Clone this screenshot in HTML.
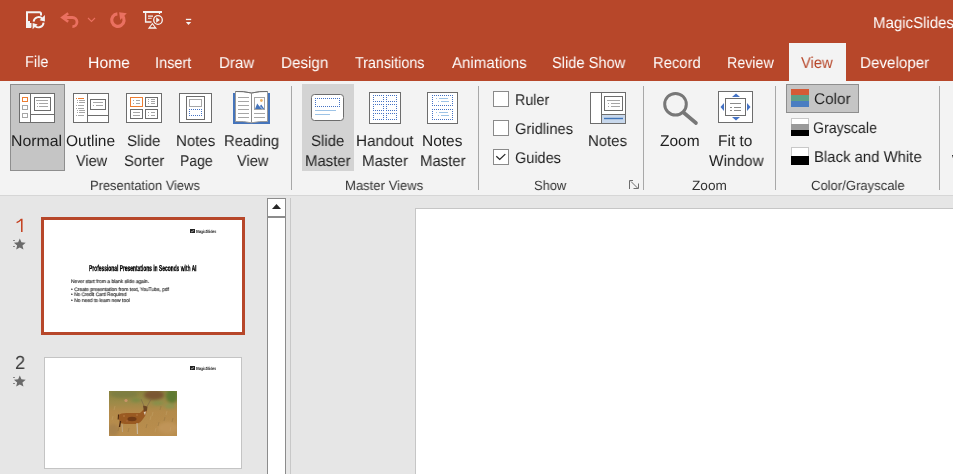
<!DOCTYPE html>
<html><head><meta charset="utf-8"><style>
html,body{margin:0;padding:0;}
body{width:953px;height:474px;overflow:hidden;position:relative;background:#E6E6E6;font-family:"Liberation Sans",sans-serif;}
.a{position:absolute;}
.tx{position:absolute;white-space:pre;line-height:1;transform-origin:0 0;font-family:"Liberation Sans",sans-serif;text-rendering:geometricPrecision;will-change:transform;}
</style></head><body>
<div class="a" style="left:0;top:0;width:953px;height:81px;background:#B7472A"></div>
<div class="a" style="left:789px;top:43px;width:57px;height:38px;background:#F3F3F3"></div>
<div class="a" style="left:0;top:81px;width:953px;height:114px;background:#F3F3F3"></div>
<div class="a" style="left:0;top:195px;width:953px;height:1px;background:#D6D6D6"></div>
<!-- buttons -->
<div class="a" style="left:10px;top:84px;width:53px;height:85px;background:#C5C5C5;border:1px solid #8E8E8E"></div>
<div class="a" style="left:302px;top:84px;width:52px;height:87px;background:#D3D3D3"></div>
<div class="a" style="left:786px;top:84px;width:71px;height:27px;background:#C5C5C5;border:1px solid #8E8E8E"></div>
<!-- separators -->
<div class="a" style="left:291px;top:86px;width:1px;height:104px;background:#A8A8A8"></div>
<div class="a" style="left:478px;top:86px;width:1px;height:104px;background:#A8A8A8"></div>
<div class="a" style="left:643px;top:86px;width:1px;height:104px;background:#A8A8A8"></div>
<div class="a" style="left:775px;top:86px;width:1px;height:104px;background:#A8A8A8"></div>
<div class="a" style="left:939px;top:86px;width:1px;height:104px;background:#A8A8A8"></div>
<div class="a" style="left:952px;top:155px;width:1px;height:1px;background:#333"></div><div class="a" style="left:952px;top:156px;width:1px;height:1px;background:#777"></div><div class="a" style="left:952px;top:157px;width:1px;height:1px;background:#bbb"></div>
<!-- workspace -->
<div class="a" style="left:415px;top:208px;width:538px;height:266px;background:#fff;border-left:1px solid #C6C6C6;border-top:1px solid #C6C6C6;box-sizing:border-box"></div>
<div class="a" style="left:290px;top:198px;width:1px;height:276px;background:#C8C8C8"></div>
<div class="a" style="left:267px;top:198px;width:19px;height:276px;background:#fff;border:1px solid #8C8C8C;border-bottom:none;box-sizing:border-box"></div>
<div class="a" style="left:267px;top:216px;width:19px;height:2px;background:#8C8C8C"></div>
<svg class="a" style="left:0;top:0" width="953" height="474" viewBox="0 0 953 474">
<path d="M272 209 L276.5 204 L281 209 Z" fill="#262626"/>
<rect x='19.5' y='93.5' width='35' height='29' fill='#fff' stroke='#6D6D6D'/><line x1='30.5' y1='93' x2='30.5' y2='123' stroke='#6D6D6D'/><line x1='30' y1='114.5' x2='55' y2='114.5' stroke='#6D6D6D'/><rect x='34.5' y='97.5' width='16' height='13' fill='#fff' stroke='#6D6D6D'/><rect x='22.5' y='97.5' width='5' height='4' fill='#fff' stroke='#ED7D31'/><rect x='22.5' y='105.5' width='5' height='4' fill='#fff' stroke='#A6A6A6'/><rect x='22.5' y='113.5' width='5' height='4' fill='#fff' stroke='#A6A6A6'/><line x1='36' y1='100.5' x2='48' y2='100.5' stroke='#A6A6A6'/><rect x='37' y='103.0' width='1' height='1' fill='#A6A6A6'/><line x1='39' y1='103.5' x2='48' y2='103.5' stroke='#A6A6A6'/><rect x='37' y='106.0' width='1' height='1' fill='#A6A6A6'/><line x1='39' y1='106.5' x2='48' y2='106.5' stroke='#A6A6A6'/><rect x='73.5' y='93.5' width='35' height='29' fill='#fff' stroke='#6D6D6D'/><line x1='87.5' y1='93' x2='87.5' y2='123' stroke='#6D6D6D'/><line x1='87' y1='115.5' x2='109' y2='115.5' stroke='#6D6D6D'/><rect x='90.5' y='99.5' width='15' height='10' fill='#fff' stroke='#6D6D6D'/><rect x='76' y='98' width='1' height='1' fill='#ED7D31'/><line x1='78' y1='98.5' x2='84' y2='98.5' stroke='#ED7D31'/><rect x='77' y='100.0' width='1' height='1' fill='#A6A6A6'/><line x1='79' y1='100.5' x2='85' y2='100.5' stroke='#A6A6A6'/><rect x='77' y='102.0' width='1' height='1' fill='#A6A6A6'/><line x1='79' y1='102.5' x2='85' y2='102.5' stroke='#A6A6A6'/><rect x='76' y='105.0' width='1' height='1' fill='#A6A6A6'/><line x1='78' y1='105.5' x2='84' y2='105.5' stroke='#A6A6A6'/><rect x='76' y='108.0' width='1' height='1' fill='#A6A6A6'/><line x1='78' y1='108.5' x2='84' y2='108.5' stroke='#A6A6A6'/><rect x='77' y='110.0' width='1' height='1' fill='#A6A6A6'/><line x1='79' y1='110.5' x2='85' y2='110.5' stroke='#A6A6A6'/><rect x='77' y='112.0' width='1' height='1' fill='#A6A6A6'/><line x1='79' y1='112.5' x2='85' y2='112.5' stroke='#A6A6A6'/><rect x='76' y='115.0' width='1' height='1' fill='#A6A6A6'/><line x1='78' y1='115.5' x2='84' y2='115.5' stroke='#A6A6A6'/><line x1='93' y1='102.5' x2='103' y2='102.5' stroke='#A6A6A6'/><rect x='93' y='105' width='1' height='1' fill='#A6A6A6'/><line x1='96' y1='105.5' x2='103' y2='105.5' stroke='#A6A6A6'/><rect x='126.5' y='93.5' width='35' height='29' fill='#fff' stroke='#6D6D6D'/><rect x='130.5' y='97.5' width='12' height='9' fill='#fff' stroke='#ED7D31'/><rect x='145.5' y='97.5' width='12' height='9' fill='#fff' stroke='#6D6D6D'/><rect x='130.5' y='109.5' width='12' height='9' fill='#fff' stroke='#6D6D6D'/><rect x='145.5' y='109.5' width='12' height='9' fill='#fff' stroke='#6D6D6D'/><rect x='133' y='100.0' width='1' height='1' fill='#A6A6A6'/><line x1='136' y1='100.5' x2='140' y2='100.5' stroke='#A6A6A6'/><rect x='133' y='103.0' width='1' height='1' fill='#A6A6A6'/><line x1='136' y1='103.5' x2='140' y2='103.5' stroke='#A6A6A6'/><rect x='148' y='99.0' width='1' height='1' fill='#A6A6A6'/><line x1='151' y1='99.5' x2='155' y2='99.5' stroke='#A6A6A6'/><rect x='148' y='101.0' width='1' height='1' fill='#A6A6A6'/><line x1='151' y1='101.5' x2='155' y2='101.5' stroke='#A6A6A6'/><rect x='148' y='103.0' width='1' height='1' fill='#A6A6A6'/><line x1='151' y1='103.5' x2='155' y2='103.5' stroke='#A6A6A6'/><line x1='133' y1='112.5' x2='140' y2='112.5' stroke='#A6A6A6'/><rect x='148' y='112.0' width='1' height='1' fill='#A6A6A6'/><line x1='151' y1='112.5' x2='155' y2='112.5' stroke='#A6A6A6'/><line x1='133' y1='115.5' x2='140' y2='115.5' stroke='#A6A6A6'/><rect x='148' y='115.0' width='1' height='1' fill='#A6A6A6'/><line x1='151' y1='115.5' x2='155' y2='115.5' stroke='#A6A6A6'/><rect x='179.5' y='93.5' width='32' height='29' fill='#fff' stroke='#6D6D6D'/><rect x='186.5' y='96.5' width='18' height='23' fill='#fff' stroke='#6D6D6D'/><rect x='189.5' y='99.5' width='12' height='7' fill='#fff' stroke='#A6A6A6'/><rect x='189.0' y='109.0' width='1' height='1' fill='#4472C4'/><rect x='189.0' y='111.0' width='1' height='1' fill='#4472C4'/><rect x='189.0' y='113.0' width='1' height='1' fill='#4472C4'/><rect x='189.0' y='115.0' width='1' height='1' fill='#4472C4'/><rect x='191.0' y='109.0' width='1' height='1' fill='#4472C4'/><rect x='191.0' y='115.0' width='1' height='1' fill='#4472C4'/><rect x='193.0' y='109.0' width='1' height='1' fill='#4472C4'/><rect x='193.0' y='115.0' width='1' height='1' fill='#4472C4'/><rect x='195.0' y='109.0' width='1' height='1' fill='#4472C4'/><rect x='195.0' y='115.0' width='1' height='1' fill='#4472C4'/><rect x='197.0' y='109.0' width='1' height='1' fill='#4472C4'/><rect x='197.0' y='115.0' width='1' height='1' fill='#4472C4'/><rect x='199.0' y='109.0' width='1' height='1' fill='#4472C4'/><rect x='199.0' y='115.0' width='1' height='1' fill='#4472C4'/><rect x='201.0' y='109.0' width='1' height='1' fill='#4472C4'/><rect x='201.0' y='111.0' width='1' height='1' fill='#4472C4'/><rect x='201.0' y='113.0' width='1' height='1' fill='#4472C4'/><rect x='201.0' y='115.0' width='1' height='1' fill='#4472C4'/><path d='M233 93 H270 V124 H233 Z' fill='#4574BB'/><path d='M235.5 91.5 Q243 91 251.5 93 Q260 91 267.5 91.5 V121.5 Q260 121 251.5 122.8 Q243 121 235.5 121.5 Z' fill='#fff' stroke='#9A9A9A'/><path d='M235.5 91.5 Q243 91 251.5 93 Q260 91 267.5 91.5' fill='none' stroke='#6D6D6D'/><line x1='251.5' y1='93' x2='251.5' y2='122.5' stroke='#8A8A8A'/><line x1='238' y1='97.5' x2='249' y2='97.5' stroke='#A6A6A6'/><line x1='238' y1='101.5' x2='249' y2='101.5' stroke='#A6A6A6'/><line x1='238' y1='105.5' x2='249' y2='105.5' stroke='#A6A6A6'/><line x1='238' y1='109.5' x2='249' y2='109.5' stroke='#A6A6A6'/><line x1='238' y1='113.5' x2='249' y2='113.5' stroke='#A6A6A6'/><line x1='238' y1='117.5' x2='249' y2='117.5' stroke='#A6A6A6'/><line x1='254' y1='113.5' x2='265' y2='113.5' stroke='#A6A6A6'/><line x1='254' y1='117.5' x2='265' y2='117.5' stroke='#A6A6A6'/><rect x='254.5' y='97.5' width='10' height='12' fill='#fff' stroke='#A6A6A6'/><path d='M255 109 L257.2 103.5 L259.6 106.5 L261.2 104.5 L264 108.5 V109 Z' fill='#4574BB'/><path d='M259.6 106.2 L262.6 109' stroke='#fff' stroke-width='0.7'/><circle cx='261.4' cy='100.5' r='1.4' fill='#EDB060'/><rect x='311.5' y='94.5' width='32' height='26' rx='3' fill='#fff' stroke='#6D6D6D'/><rect x='315.0' y='98.0' width='1' height='1' fill='#4472C4'/><rect x='315.0' y='100.0' width='1' height='1' fill='#4472C4'/><rect x='315.0' y='102.0' width='1' height='1' fill='#4472C4'/><rect x='315.0' y='104.0' width='1' height='1' fill='#4472C4'/><rect x='315.0' y='106.0' width='1' height='1' fill='#4472C4'/><rect x='317.0' y='98.0' width='1' height='1' fill='#4472C4'/><rect x='317.0' y='106.0' width='1' height='1' fill='#4472C4'/><rect x='319.0' y='98.0' width='1' height='1' fill='#4472C4'/><rect x='319.0' y='106.0' width='1' height='1' fill='#4472C4'/><rect x='321.0' y='98.0' width='1' height='1' fill='#4472C4'/><rect x='321.0' y='106.0' width='1' height='1' fill='#4472C4'/><rect x='323.0' y='98.0' width='1' height='1' fill='#4472C4'/><rect x='323.0' y='106.0' width='1' height='1' fill='#4472C4'/><rect x='325.0' y='98.0' width='1' height='1' fill='#4472C4'/><rect x='325.0' y='106.0' width='1' height='1' fill='#4472C4'/><rect x='327.0' y='98.0' width='1' height='1' fill='#4472C4'/><rect x='327.0' y='106.0' width='1' height='1' fill='#4472C4'/><rect x='329.0' y='98.0' width='1' height='1' fill='#4472C4'/><rect x='329.0' y='106.0' width='1' height='1' fill='#4472C4'/><rect x='331.0' y='98.0' width='1' height='1' fill='#4472C4'/><rect x='331.0' y='106.0' width='1' height='1' fill='#4472C4'/><rect x='333.0' y='98.0' width='1' height='1' fill='#4472C4'/><rect x='333.0' y='106.0' width='1' height='1' fill='#4472C4'/><rect x='335.0' y='98.0' width='1' height='1' fill='#4472C4'/><rect x='335.0' y='106.0' width='1' height='1' fill='#4472C4'/><rect x='337.0' y='98.0' width='1' height='1' fill='#4472C4'/><rect x='337.0' y='106.0' width='1' height='1' fill='#4472C4'/><rect x='339.0' y='98.0' width='1' height='1' fill='#4472C4'/><rect x='339.0' y='100.0' width='1' height='1' fill='#4472C4'/><rect x='339.0' y='102.0' width='1' height='1' fill='#4472C4'/><rect x='339.0' y='104.0' width='1' height='1' fill='#4472C4'/><rect x='339.0' y='106.0' width='1' height='1' fill='#4472C4'/><line x1='315' y1='110.5' x2='336' y2='110.5' stroke='#9DC3E6'/><line x1='315' y1='114.5' x2='330' y2='114.5' stroke='#9DC3E6'/><rect x='369.5' y='92.5' width='31' height='31' fill='#fff' stroke='#6D6D6D'/><rect x='373.0' y='95.0' width='1' height='1' fill='#4472C4'/><rect x='373.0' y='97.0' width='1' height='1' fill='#4472C4'/><rect x='373.0' y='99.0' width='1' height='1' fill='#4472C4'/><rect x='373.0' y='101.0' width='1' height='1' fill='#4472C4'/><rect x='375.0' y='95.0' width='1' height='1' fill='#4472C4'/><rect x='375.0' y='101.0' width='1' height='1' fill='#4472C4'/><rect x='377.0' y='95.0' width='1' height='1' fill='#4472C4'/><rect x='377.0' y='101.0' width='1' height='1' fill='#4472C4'/><rect x='379.0' y='95.0' width='1' height='1' fill='#4472C4'/><rect x='379.0' y='101.0' width='1' height='1' fill='#4472C4'/><rect x='381.0' y='95.0' width='1' height='1' fill='#4472C4'/><rect x='381.0' y='101.0' width='1' height='1' fill='#4472C4'/><rect x='383.0' y='95.0' width='1' height='1' fill='#4472C4'/><rect x='383.0' y='97.0' width='1' height='1' fill='#4472C4'/><rect x='383.0' y='99.0' width='1' height='1' fill='#4472C4'/><rect x='383.0' y='101.0' width='1' height='1' fill='#4472C4'/><rect x='373.0' y='104.0' width='1' height='1' fill='#4472C4'/><rect x='373.0' y='106.0' width='1' height='1' fill='#4472C4'/><rect x='373.0' y='108.0' width='1' height='1' fill='#4472C4'/><rect x='373.0' y='110.0' width='1' height='1' fill='#4472C4'/><rect x='375.0' y='104.0' width='1' height='1' fill='#4472C4'/><rect x='375.0' y='110.0' width='1' height='1' fill='#4472C4'/><rect x='377.0' y='104.0' width='1' height='1' fill='#4472C4'/><rect x='377.0' y='110.0' width='1' height='1' fill='#4472C4'/><rect x='379.0' y='104.0' width='1' height='1' fill='#4472C4'/><rect x='379.0' y='110.0' width='1' height='1' fill='#4472C4'/><rect x='381.0' y='104.0' width='1' height='1' fill='#4472C4'/><rect x='381.0' y='110.0' width='1' height='1' fill='#4472C4'/><rect x='383.0' y='104.0' width='1' height='1' fill='#4472C4'/><rect x='383.0' y='106.0' width='1' height='1' fill='#4472C4'/><rect x='383.0' y='108.0' width='1' height='1' fill='#4472C4'/><rect x='383.0' y='110.0' width='1' height='1' fill='#4472C4'/><rect x='373.0' y='113.0' width='1' height='1' fill='#4472C4'/><rect x='373.0' y='115.0' width='1' height='1' fill='#4472C4'/><rect x='373.0' y='117.0' width='1' height='1' fill='#4472C4'/><rect x='373.0' y='119.0' width='1' height='1' fill='#4472C4'/><rect x='375.0' y='113.0' width='1' height='1' fill='#4472C4'/><rect x='375.0' y='119.0' width='1' height='1' fill='#4472C4'/><rect x='377.0' y='113.0' width='1' height='1' fill='#4472C4'/><rect x='377.0' y='119.0' width='1' height='1' fill='#4472C4'/><rect x='379.0' y='113.0' width='1' height='1' fill='#4472C4'/><rect x='379.0' y='119.0' width='1' height='1' fill='#4472C4'/><rect x='381.0' y='113.0' width='1' height='1' fill='#4472C4'/><rect x='381.0' y='119.0' width='1' height='1' fill='#4472C4'/><rect x='383.0' y='113.0' width='1' height='1' fill='#4472C4'/><rect x='383.0' y='115.0' width='1' height='1' fill='#4472C4'/><rect x='383.0' y='117.0' width='1' height='1' fill='#4472C4'/><rect x='383.0' y='119.0' width='1' height='1' fill='#4472C4'/><rect x='386.0' y='95.0' width='1' height='1' fill='#4472C4'/><rect x='386.0' y='97.0' width='1' height='1' fill='#4472C4'/><rect x='386.0' y='99.0' width='1' height='1' fill='#4472C4'/><rect x='386.0' y='101.0' width='1' height='1' fill='#4472C4'/><rect x='388.0' y='95.0' width='1' height='1' fill='#4472C4'/><rect x='388.0' y='101.0' width='1' height='1' fill='#4472C4'/><rect x='390.0' y='95.0' width='1' height='1' fill='#4472C4'/><rect x='390.0' y='101.0' width='1' height='1' fill='#4472C4'/><rect x='392.0' y='95.0' width='1' height='1' fill='#4472C4'/><rect x='392.0' y='101.0' width='1' height='1' fill='#4472C4'/><rect x='394.0' y='95.0' width='1' height='1' fill='#4472C4'/><rect x='394.0' y='101.0' width='1' height='1' fill='#4472C4'/><rect x='396.0' y='95.0' width='1' height='1' fill='#4472C4'/><rect x='396.0' y='97.0' width='1' height='1' fill='#4472C4'/><rect x='396.0' y='99.0' width='1' height='1' fill='#4472C4'/><rect x='396.0' y='101.0' width='1' height='1' fill='#4472C4'/><rect x='386.0' y='104.0' width='1' height='1' fill='#4472C4'/><rect x='386.0' y='106.0' width='1' height='1' fill='#4472C4'/><rect x='386.0' y='108.0' width='1' height='1' fill='#4472C4'/><rect x='386.0' y='110.0' width='1' height='1' fill='#4472C4'/><rect x='388.0' y='104.0' width='1' height='1' fill='#4472C4'/><rect x='388.0' y='110.0' width='1' height='1' fill='#4472C4'/><rect x='390.0' y='104.0' width='1' height='1' fill='#4472C4'/><rect x='390.0' y='110.0' width='1' height='1' fill='#4472C4'/><rect x='392.0' y='104.0' width='1' height='1' fill='#4472C4'/><rect x='392.0' y='110.0' width='1' height='1' fill='#4472C4'/><rect x='394.0' y='104.0' width='1' height='1' fill='#4472C4'/><rect x='394.0' y='110.0' width='1' height='1' fill='#4472C4'/><rect x='396.0' y='104.0' width='1' height='1' fill='#4472C4'/><rect x='396.0' y='106.0' width='1' height='1' fill='#4472C4'/><rect x='396.0' y='108.0' width='1' height='1' fill='#4472C4'/><rect x='396.0' y='110.0' width='1' height='1' fill='#4472C4'/><rect x='386.0' y='113.0' width='1' height='1' fill='#4472C4'/><rect x='386.0' y='115.0' width='1' height='1' fill='#4472C4'/><rect x='386.0' y='117.0' width='1' height='1' fill='#4472C4'/><rect x='386.0' y='119.0' width='1' height='1' fill='#4472C4'/><rect x='388.0' y='113.0' width='1' height='1' fill='#4472C4'/><rect x='388.0' y='119.0' width='1' height='1' fill='#4472C4'/><rect x='390.0' y='113.0' width='1' height='1' fill='#4472C4'/><rect x='390.0' y='119.0' width='1' height='1' fill='#4472C4'/><rect x='392.0' y='113.0' width='1' height='1' fill='#4472C4'/><rect x='392.0' y='119.0' width='1' height='1' fill='#4472C4'/><rect x='394.0' y='113.0' width='1' height='1' fill='#4472C4'/><rect x='394.0' y='119.0' width='1' height='1' fill='#4472C4'/><rect x='396.0' y='113.0' width='1' height='1' fill='#4472C4'/><rect x='396.0' y='115.0' width='1' height='1' fill='#4472C4'/><rect x='396.0' y='117.0' width='1' height='1' fill='#4472C4'/><rect x='396.0' y='119.0' width='1' height='1' fill='#4472C4'/><rect x='427.5' y='92.5' width='30' height='31' fill='#fff' stroke='#6D6D6D'/><rect x='432.0' y='95.0' width='1' height='1' fill='#4472C4'/><rect x='432.0' y='97.0' width='1' height='1' fill='#4472C4'/><rect x='432.0' y='99.0' width='1' height='1' fill='#4472C4'/><rect x='432.0' y='101.0' width='1' height='1' fill='#4472C4'/><rect x='432.0' y='103.0' width='1' height='1' fill='#4472C4'/><rect x='432.0' y='105.0' width='1' height='1' fill='#4472C4'/><rect x='434.0' y='95.0' width='1' height='1' fill='#4472C4'/><rect x='434.0' y='105.0' width='1' height='1' fill='#4472C4'/><rect x='436.0' y='95.0' width='1' height='1' fill='#4472C4'/><rect x='436.0' y='105.0' width='1' height='1' fill='#4472C4'/><rect x='438.0' y='95.0' width='1' height='1' fill='#4472C4'/><rect x='438.0' y='105.0' width='1' height='1' fill='#4472C4'/><rect x='440.0' y='95.0' width='1' height='1' fill='#4472C4'/><rect x='440.0' y='105.0' width='1' height='1' fill='#4472C4'/><rect x='442.0' y='95.0' width='1' height='1' fill='#4472C4'/><rect x='442.0' y='105.0' width='1' height='1' fill='#4472C4'/><rect x='444.0' y='95.0' width='1' height='1' fill='#4472C4'/><rect x='444.0' y='105.0' width='1' height='1' fill='#4472C4'/><rect x='446.0' y='95.0' width='1' height='1' fill='#4472C4'/><rect x='446.0' y='105.0' width='1' height='1' fill='#4472C4'/><rect x='448.0' y='95.0' width='1' height='1' fill='#4472C4'/><rect x='448.0' y='105.0' width='1' height='1' fill='#4472C4'/><rect x='450.0' y='95.0' width='1' height='1' fill='#4472C4'/><rect x='450.0' y='105.0' width='1' height='1' fill='#4472C4'/><rect x='452.0' y='95.0' width='1' height='1' fill='#4472C4'/><rect x='452.0' y='97.0' width='1' height='1' fill='#4472C4'/><rect x='452.0' y='99.0' width='1' height='1' fill='#4472C4'/><rect x='452.0' y='101.0' width='1' height='1' fill='#4472C4'/><rect x='452.0' y='103.0' width='1' height='1' fill='#4472C4'/><rect x='452.0' y='105.0' width='1' height='1' fill='#4472C4'/><rect x='436' y='98.0' width='1' height='1' fill='#9DC3E6'/><line x1='439' y1='98.5' x2='448' y2='98.5' stroke='#9DC3E6'/><rect x='438' y='101.0' width='1' height='1' fill='#9DC3E6'/><line x1='441' y1='101.5' x2='449' y2='101.5' stroke='#9DC3E6'/><rect x='432.0' y='109.0' width='1' height='1' fill='#4472C4'/><rect x='432.0' y='111.0' width='1' height='1' fill='#4472C4'/><rect x='432.0' y='113.0' width='1' height='1' fill='#4472C4'/><rect x='432.0' y='115.0' width='1' height='1' fill='#4472C4'/><rect x='432.0' y='117.0' width='1' height='1' fill='#4472C4'/><rect x='432.0' y='119.0' width='1' height='1' fill='#4472C4'/><rect x='434.0' y='109.0' width='1' height='1' fill='#4472C4'/><rect x='434.0' y='119.0' width='1' height='1' fill='#4472C4'/><rect x='436.0' y='109.0' width='1' height='1' fill='#4472C4'/><rect x='436.0' y='119.0' width='1' height='1' fill='#4472C4'/><rect x='438.0' y='109.0' width='1' height='1' fill='#4472C4'/><rect x='438.0' y='119.0' width='1' height='1' fill='#4472C4'/><rect x='440.0' y='109.0' width='1' height='1' fill='#4472C4'/><rect x='440.0' y='119.0' width='1' height='1' fill='#4472C4'/><rect x='442.0' y='109.0' width='1' height='1' fill='#4472C4'/><rect x='442.0' y='119.0' width='1' height='1' fill='#4472C4'/><rect x='444.0' y='109.0' width='1' height='1' fill='#4472C4'/><rect x='444.0' y='119.0' width='1' height='1' fill='#4472C4'/><rect x='446.0' y='109.0' width='1' height='1' fill='#4472C4'/><rect x='446.0' y='119.0' width='1' height='1' fill='#4472C4'/><rect x='448.0' y='109.0' width='1' height='1' fill='#4472C4'/><rect x='448.0' y='119.0' width='1' height='1' fill='#4472C4'/><rect x='450.0' y='109.0' width='1' height='1' fill='#4472C4'/><rect x='450.0' y='119.0' width='1' height='1' fill='#4472C4'/><rect x='452.0' y='109.0' width='1' height='1' fill='#4472C4'/><rect x='452.0' y='111.0' width='1' height='1' fill='#4472C4'/><rect x='452.0' y='113.0' width='1' height='1' fill='#4472C4'/><rect x='452.0' y='115.0' width='1' height='1' fill='#4472C4'/><rect x='452.0' y='117.0' width='1' height='1' fill='#4472C4'/><rect x='452.0' y='119.0' width='1' height='1' fill='#4472C4'/><rect x='436' y='112.0' width='1' height='1' fill='#9DC3E6'/><line x1='439' y1='112.5' x2='448' y2='112.5' stroke='#9DC3E6'/><rect x='438' y='115.0' width='1' height='1' fill='#9DC3E6'/><line x1='441' y1='115.5' x2='449' y2='115.5' stroke='#9DC3E6'/><rect x='493.5' y='91.5' width='15' height='15' fill='#fff' stroke='#8A8A8A'/><rect x='493.5' y='120.5' width='15' height='15' fill='#fff' stroke='#8A8A8A'/><rect x='493.5' y='149.5' width='15' height='15' fill='#fff' stroke='#8A8A8A'/><path d='M496.3 156.2 L499.7 159.4 L505.3 154.1' fill='none' stroke='#262626' stroke-width='1.3'/><rect x='590.5' y='92.5' width='35' height='31' fill='#fff' stroke='#6D6D6D'/><rect x='602' y='115' width='23' height='8' fill='#C8D8EC'/><line x1='601.5' y1='92' x2='601.5' y2='124' stroke='#6D6D6D'/><line x1='601' y1='114.5' x2='626' y2='114.5' stroke='#6D6D6D'/><rect x='604.5' y='96.5' width='18' height='14' fill='#fff' stroke='#6D6D6D'/><line x1='604' y1='118.5' x2='623' y2='118.5' stroke='#3E73B8' stroke-width='1.4'/><line x1='607' y1='100.5' x2='620' y2='100.5' stroke='#A6A6A6'/><rect x='608' y='103.0' width='1' height='1' fill='#A6A6A6'/><line x1='611' y1='103.5' x2='620' y2='103.5' stroke='#A6A6A6'/><rect x='608' y='106.0' width='1' height='1' fill='#A6A6A6'/><line x1='611' y1='106.5' x2='620' y2='106.5' stroke='#A6A6A6'/><path d='M629.5 189 V180.5 H633' fill='none' stroke='#6D6D6D'/><path d='M631 181.5 L637.5 188' stroke='#6D6D6D'/><path d='M638.5 183.5 V188.5 H633.5' fill='none' stroke='#6D6D6D'/><circle cx='675.5' cy='104.2' r='10.8' fill='none' stroke='#777' stroke-width='3'/><line x1='683.5' y1='112.5' x2='696' y2='123' stroke='#777' stroke-width='3.6' stroke-linecap='round'/><rect x='718.5' y='91.5' width='34' height='31' fill='#fff' stroke='#6D6D6D'/><rect x='725.5' y='98.5' width='20' height='17' fill='#fff' stroke='#6D6D6D'/><path d='M732 97 H740 L736 93.5 Z M732 117 H740 L736 120.5 Z M724 103 V111 L720.5 107 Z M747 103 V111 L750.5 107 Z' fill='#4472C4'/><line x1='730' y1='103.5' x2='741' y2='103.5' stroke='#8A8A8A'/><line x1='730' y1='107.5' x2='732' y2='107.5' stroke='#8A8A8A'/><line x1='734' y1='107.5' x2='741' y2='107.5' stroke='#8A8A8A'/><line x1='730' y1='110.5' x2='732' y2='110.5' stroke='#8A8A8A'/><line x1='734' y1='110.5' x2='741' y2='110.5' stroke='#8A8A8A'/><rect x='791' y='89' width='18' height='6' fill='#D55A37'/><rect x='791' y='95' width='18' height='6' fill='#5E9F88'/><rect x='791' y='101' width='18' height='6' fill='#4A7DC1'/><rect x='791.5' y='118.5' width='17' height='17' fill='#fff' stroke='#C8C8C8'/><rect x='791' y='124' width='18' height='6' fill='#9A9A9A'/><rect x='791' y='130' width='18' height='6' fill='#000'/><rect x='791.5' y='147.5' width='17' height='17' fill='#fff' stroke='#C8C8C8'/><rect x='791' y='156' width='18' height='9' fill='#000'/>
<path d='M31 27 H27 V12.2 H39.5 Q41 12.2 41 13.7 V15.5' fill='none' stroke='#F4F4F4' stroke-width='2'/><path d='M26.5 21 H30 V23 H31.5 V27.5 H26.5 Z' fill='#F4F4F4'/><path d='M33.6 21.6 A5.1 5.1 0 0 1 42.3 18.6' fill='none' stroke='#F4F4F4' stroke-width='1.9'/><path d='M44.9 14.9 V21.5 L39.6 20.2 Z' fill='#F4F4F4'/><path d='M43.6 22.6 A5.1 5.1 0 0 1 34.9 25.8' fill='none' stroke='#F4F4F4' stroke-width='1.9'/><path d='M32.6 29.2 V23 L37.6 24.6 Z' fill='#F4F4F4'/><path d='M68.2 13.2 L62.4 17.5 L68.2 21.8' fill='none' stroke='#EA7060' stroke-width='2.6'/><path d='M62.8 17.5 H72.4 A4.6 4.6 0 0 1 72.4 26.7' fill='none' stroke='#EA7060' stroke-width='2.8'/><path d='M88 18 L91.5 21.5 L95 18' fill='none' stroke='#EA7060' stroke-width='1.1'/><path d='M117.4 13.9 A6.2 6.2 0 1 0 122.3 15.7' fill='none' stroke='#EA7060' stroke-width='3.2'/><path d='M119.1 12.2 L126.8 13.3 L120.2 20 Z' fill='#EA7060'/><path d='M143 12 H162' stroke='#F4F4F4' stroke-width='2'/><path d='M145.6 12.5 V22 H151.5' fill='none' stroke='#F4F4F4' stroke-width='1.4'/><path d='M159.5 12.5 V14' stroke='#F4F4F4' stroke-width='1.2'/><path d='M148 16.1 H153 M148 18.3 H151.7' stroke='#F4F4F4' stroke-width='1.1'/><circle cx='158' cy='20' r='4.3' fill='none' stroke='#F4F4F4' stroke-width='1.3'/><path d='M156.2 17.3 V22.7 L159.9 20 Z' fill='#F4F4F4'/><path d='M147.8 28.8 L152.4 22.8 L157 28.8 Z' fill='#F4F4F4'/><path d='M150.2 27.3 L152.4 24.6 L154.6 27.3 Z' fill='#B7472A'/><rect x='185.9' y='18.8' width='5.3' height='1.3' fill='#F4F4F4'/><path d='M185.9 22 H191.2 L188.5 25 Z' fill='#F4F4F4'/>
</svg>
<div class="a" style="left:41px;top:217px;width:204px;height:118px;border:3px solid #B7472A;box-sizing:border-box;background:#fff"></div><div class="a" style="left:44px;top:357px;width:198px;height:112px;border:1px solid #C4C4C4;box-sizing:border-box;background:#fff"></div>
<svg class="a" style="left:0;top:0" width="953" height="474" viewBox="0 0 953 474"><path d='M21.8 232 V219.4 H21.2 Q19.5 221.5 16.6 222.6' fill='none' stroke='#C43E1C' stroke-width='1.5'/><path d='M19.80 238.40 L21.44 242.34 L25.70 242.68 L22.45 245.46 L23.44 249.62 L19.80 247.39 L16.16 249.62 L17.15 245.46 L13.90 242.68 L18.16 242.34 Z' fill='#6A6A6A'/><rect x='13' y='240' width='2' height='1' fill='#8a8a8a'/><rect x='13' y='246' width='2' height='1' fill='#8a8a8a'/><path d='M19.80 375.40 L21.44 379.34 L25.70 379.68 L22.45 382.46 L23.44 386.62 L19.80 384.39 L16.16 386.62 L17.15 382.46 L13.90 379.68 L18.16 379.34 Z' fill='#6A6A6A'/><rect x='13' y='377' width='2' height='1' fill='#8a8a8a'/><rect x='13' y='383' width='2' height='1' fill='#8a8a8a'/><rect x='190' y='229' width='5' height='4' fill='#222'/><path d='M191 232 L194 230.5' stroke='#fff' stroke-width='0.6'/><rect x='190' y='366' width='5' height='4' fill='#222'/><path d='M191 369 L194 367.5' stroke='#fff' stroke-width='0.6'/><defs><linearGradient id="dg" x1="0" y1="0" x2="0" y2="1">
<stop offset="0" stop-color="#88823E"/><stop offset="0.25" stop-color="#9C8A48"/><stop offset="0.45" stop-color="#B38A4A"/><stop offset="1" stop-color="#BA8E4E"/></linearGradient>
<filter id="bl" x="-30%" y="-30%" width="160%" height="160%"><feGaussianBlur stdDeviation="1.8"/></filter>
<filter id="bl2" x="-20%" y="-20%" width="140%" height="140%"><feGaussianBlur stdDeviation="0.6"/></filter>
<clipPath id="dc"><rect x="109" y="391" width="68" height="45"/></clipPath></defs><g clip-path='url(#dc)'><rect x='109' y='391' width='68' height='45' fill='url(#dg)'/><g filter='url(#bl)'><ellipse cx='154' cy='395' rx='10' ry='5' fill='#7A5632'/><ellipse cx='172' cy='396' rx='6' ry='7' fill='#5E7A30'/><ellipse cx='124' cy='394' rx='14' ry='4' fill='#7E7E42'/><ellipse cx='136' cy='400' rx='5' ry='2' fill='#7C8A44'/><ellipse cx='158' cy='403' rx='6' ry='2' fill='#86904A'/><ellipse cx='170' cy='406' rx='5' ry='2.5' fill='#8A9450'/><ellipse cx='168' cy='428' rx='10' ry='6' fill='#C09458'/><ellipse cx='113' cy='430' rx='6' ry='6' fill='#A8824C'/></g><path d='M112 420 l1 -4' stroke='#C4A46C' stroke-width='0.8' opacity='0.55'/><path d='M118 431 l1 -4' stroke='#8E7040' stroke-width='0.8' opacity='0.55'/><path d='M150 420 l1 -4' stroke='#C4A46C' stroke-width='0.8' opacity='0.55'/><path d='M158 426 l1 -4' stroke='#8E7040' stroke-width='0.8' opacity='0.55'/><path d='M166 415 l1 -4' stroke='#C4A46C' stroke-width='0.8' opacity='0.55'/><path d='M172 422 l1 -4' stroke='#8E7040' stroke-width='0.8' opacity='0.55'/><path d='M155 432 l1 -4' stroke='#C4A46C' stroke-width='0.8' opacity='0.55'/><path d='M128 432 l1 -4' stroke='#8E7040' stroke-width='0.8' opacity='0.55'/><path d='M114 410 l1 -4' stroke='#C4A46C' stroke-width='0.8' opacity='0.55'/><path d='M160 410 l1 -4' stroke='#8E7040' stroke-width='0.8' opacity='0.55'/><path d='M170 431 l1 -4' stroke='#C4A46C' stroke-width='0.8' opacity='0.55'/><path d='M146 428 l1 -4' stroke='#8E7040' stroke-width='0.8' opacity='0.55'/><path d='M152 416 l1 -4' stroke='#C4A46C' stroke-width='0.8' opacity='0.55'/><path d='M164 421 l1 -4' stroke='#8E7040' stroke-width='0.8' opacity='0.55'/><g filter='url(#bl2)'><circle cx='126' cy='400.5' r='1.6' fill='#C89468'/><path d='M118.5 415 Q121 412.5 129 413 L140 413 Q142 411 143.5 409.5 L147 410 Q146.5 415 143 419 Q140.5 423 136.5 424 L127 424 Q122 424 120 422 Q118 419 118.5 415 Z' fill='#9A5A24'/><ellipse cx='132' cy='419' rx='4.5' ry='2.2' fill='#6A3616' opacity='0.85'/><circle cx='124' cy='416' r='0.8' fill='#C08048'/><circle cx='137' cy='415' r='0.8' fill='#B87A44'/><circle cx='127' cy='421' r='0.7' fill='#B07040'/><path d='M143 405.5 L147.5 406.5 L147 410.5 L144 412 Z' fill='#6B4524'/><path d='M143.6 412 L146 411.5 L145 415.5 Z' fill='#DCCCB4'/><path d='M144 406 L141 399 M147 406.5 L151.5 398.5' stroke='#7A6448' stroke-width='0.6' fill='none'/><path d='M137 423 L137.5 434' stroke='#C8B8A0' stroke-width='1.1'/><path d='M120.5 421 L119.5 427' stroke='#4A2810' stroke-width='1.4'/><path d='M122 424 L122.5 432' stroke='#C0A888' stroke-width='0.9'/><path d='M118.5 414.5 L118.2 419.5' stroke='#4A2810' stroke-width='1.1'/></g></g></svg>
<span class='tx' style='left:24.88px;top:55.00px;font-size:15.8px;color:#FFFFFF;font-weight:400;transform:scaleX(0.9167);'>File</span>
<span class='tx' style='left:88.00px;top:56.00px;font-size:15.8px;color:#FFFFFF;font-weight:400;transform:scaleX(0.9950);'>Home</span>
<span class='tx' style='left:155.08px;top:56.00px;font-size:15.8px;color:#FFFFFF;font-weight:400;transform:scaleX(0.9211);'>Insert</span>
<span class='tx' style='left:218.55px;top:56.00px;font-size:15.8px;color:#FFFFFF;font-weight:400;transform:scaleX(0.9528);'>Draw</span>
<span class='tx' style='left:280.54px;top:56.00px;font-size:15.8px;color:#FFFFFF;font-weight:400;transform:scaleX(0.9617);'>Design</span>
<span class='tx' style='left:355.00px;top:56.00px;font-size:15.8px;color:#FFFFFF;font-weight:400;transform:scaleX(0.9053);'>Transitions</span>
<span class='tx' style='left:451.50px;top:56.00px;font-size:15.8px;color:#FFFFFF;font-weight:400;transform:scaleX(0.9551);'>Animations</span>
<span class='tx' style='left:552.37px;top:56.00px;font-size:15.8px;color:#FFFFFF;font-weight:400;transform:scaleX(0.9282);'>Slide Show</span>
<span class='tx' style='left:652.67px;top:56.00px;font-size:15.8px;color:#FFFFFF;font-weight:400;transform:scaleX(0.9347);'>Record</span>
<span class='tx' style='left:726.80px;top:56.00px;font-size:15.8px;color:#FFFFFF;font-weight:400;transform:scaleX(0.9020);'>Review</span>
<span class='tx' style='left:859.54px;top:56.00px;font-size:15.8px;color:#FFFFFF;font-weight:400;transform:scaleX(0.9606);'>Developer</span>
<span class='tx' style='left:801.00px;top:56.00px;font-size:15.8px;color:#B7472A;font-weight:400;transform:scaleX(0.9324);'>View</span>
<span class='tx' style='left:872.55px;top:16.00px;font-size:15.8px;color:#FFFFFF;font-weight:400;transform:scaleX(0.9500);'>MagicSlides</span>
<span class='tx' style='left:11.28px;top:134.00px;font-size:15.5px;color:#1F1F1F;font-weight:400;transform:scaleX(1.0208);'>Normal</span>
<span class='tx' style='left:66.40px;top:134.00px;font-size:15.5px;color:#1F1F1F;font-weight:400;transform:scaleX(1.0000);'>Outline</span>
<span class='tx' style='left:75.50px;top:153.50px;font-size:15.5px;color:#1F1F1F;font-weight:400;transform:scaleX(0.9364);'>View</span>
<span class='tx' style='left:126.53px;top:134.00px;font-size:15.5px;color:#1F1F1F;font-weight:400;transform:scaleX(0.9727);'>Slide</span>
<span class='tx' style='left:123.54px;top:153.50px;font-size:15.5px;color:#1F1F1F;font-weight:400;transform:scaleX(0.9561);'>Sorter</span>
<span class='tx' style='left:175.73px;top:134.00px;font-size:15.5px;color:#1F1F1F;font-weight:400;transform:scaleX(0.9692);'>Notes</span>
<span class='tx' style='left:179.70px;top:153.50px;font-size:15.5px;color:#1F1F1F;font-weight:400;transform:scaleX(0.9029);'>Page</span>
<span class='tx' style='left:223.94px;top:134.00px;font-size:15.5px;color:#1F1F1F;font-weight:400;transform:scaleX(0.9554);'>Reading</span>
<span class='tx' style='left:236.80px;top:153.50px;font-size:15.5px;color:#1F1F1F;font-weight:400;transform:scaleX(0.9455);'>View</span>
<span class='tx' style='left:310.73px;top:134.00px;font-size:15.5px;color:#1F1F1F;font-weight:400;transform:scaleX(0.9697);'>Slide</span>
<span class='tx' style='left:304.54px;top:153.50px;font-size:15.5px;color:#1F1F1F;font-weight:400;transform:scaleX(0.9630);'>Master</span>
<span class='tx' style='left:355.62px;top:134.00px;font-size:15.5px;color:#1F1F1F;font-weight:400;transform:scaleX(0.9828);'>Handout</span>
<span class='tx' style='left:362.33px;top:153.50px;font-size:15.5px;color:#1F1F1F;font-weight:400;transform:scaleX(0.9696);'>Master</span>
<span class='tx' style='left:422.10px;top:134.00px;font-size:15.5px;color:#1F1F1F;font-weight:400;transform:scaleX(0.9974);'>Notes</span>
<span class='tx' style='left:419.64px;top:153.50px;font-size:15.5px;color:#1F1F1F;font-weight:400;transform:scaleX(0.9630);'>Master</span>
<span class='tx' style='left:514.68px;top:93.00px;font-size:15.5px;color:#1F1F1F;font-weight:400;transform:scaleX(0.9222);'>Ruler</span>
<span class='tx' style='left:514.65px;top:122.00px;font-size:15.5px;color:#1F1F1F;font-weight:400;transform:scaleX(0.9483);'>Gridlines</span>
<span class='tx' style='left:514.66px;top:151.00px;font-size:15.5px;color:#1F1F1F;font-weight:400;transform:scaleX(0.9362);'>Guides</span>
<span class='tx' style='left:587.84px;top:134.00px;font-size:15.5px;color:#1F1F1F;font-weight:400;transform:scaleX(0.9641);'>Notes</span>
<span class='tx' style='left:660.20px;top:134.00px;font-size:15.5px;color:#1F1F1F;font-weight:400;transform:scaleX(1.0000);'>Zoom</span>
<span class='tx' style='left:718.20px;top:134.00px;font-size:15.5px;color:#1F1F1F;font-weight:400;transform:scaleX(0.9970);'>Fit to</span>
<span class='tx' style='left:708.50px;top:153.50px;font-size:15.5px;color:#1F1F1F;font-weight:400;transform:scaleX(0.9909);'>Window</span>
<span class='tx' style='left:813.51px;top:92.00px;font-size:15.5px;color:#1F1F1F;font-weight:400;transform:scaleX(0.9861);'>Color</span>
<span class='tx' style='left:813.28px;top:121.00px;font-size:15.5px;color:#1F1F1F;font-weight:400;transform:scaleX(0.9162);'>Grayscale</span>
<span class='tx' style='left:813.84px;top:149.50px;font-size:15.5px;color:#1F1F1F;font-weight:400;transform:scaleX(0.9609);'>Black and White</span>
<span class='tx' style='left:90.14px;top:179.20px;font-size:13.4px;color:#333333;font-weight:400;transform:scaleX(0.9602);'>Presentation Views</span>
<span class='tx' style='left:345.42px;top:179.20px;font-size:13.4px;color:#333333;font-weight:400;transform:scaleX(0.9759);'>Master Views</span>
<span class='tx' style='left:534.34px;top:179.20px;font-size:13.4px;color:#333333;font-weight:400;transform:scaleX(0.9625);'>Show</span>
<span class='tx' style='left:691.80px;top:179.20px;font-size:13.4px;color:#333333;font-weight:400;transform:scaleX(1.0182);'>Zoom</span>
<span class='tx' style='left:810.82px;top:179.20px;font-size:13.4px;color:#333333;font-weight:400;transform:scaleX(0.9755);'>Color/Grayscale</span>
<span class='tx' style='left:14.63px;top:355.00px;font-size:18.9px;color:#404040;font-weight:400;transform:scaleX(0.9667);'>2</span>
<span class='tx' style='left:89.40px;top:264.00px;font-size:8.5px;color:#000000;font-weight:700;transform:scaleX(0.5743);-webkit-text-stroke:0.3px #000'>Professional Presentations in Seconds with AI</span>
<span class='tx' style='left:70.90px;top:279.70px;font-size:5px;color:#333333;font-weight:400;transform:scaleX(0.9762);-webkit-text-stroke:0.2px #444'>Never start from a blank slide again.</span>
<span class='tx' style='left:70.90px;top:288.20px;font-size:5px;color:#333333;font-weight:400;transform:scaleX(0.9810);-webkit-text-stroke:0.2px #444'>• Create presentation from text, YouTube, pdf</span>
<span class='tx' style='left:70.90px;top:293.20px;font-size:5px;color:#333333;font-weight:400;transform:scaleX(0.9552);-webkit-text-stroke:0.2px #444'>• No Credit Card Required</span>
<span class='tx' style='left:70.90px;top:298.70px;font-size:5px;color:#333333;font-weight:400;transform:scaleX(0.9800);-webkit-text-stroke:0.2px #444'>• No need to learn new tool</span>
<span class='tx' style='left:196.00px;top:230.00px;font-size:4.5px;color:#222222;font-weight:700;transform:scaleX(0.7769);'>MagicSlides</span>
<span class='tx' style='left:196.00px;top:367.20px;font-size:4.5px;color:#222222;font-weight:700;transform:scaleX(0.7731);'>MagicSlides</span>
</body></html>
